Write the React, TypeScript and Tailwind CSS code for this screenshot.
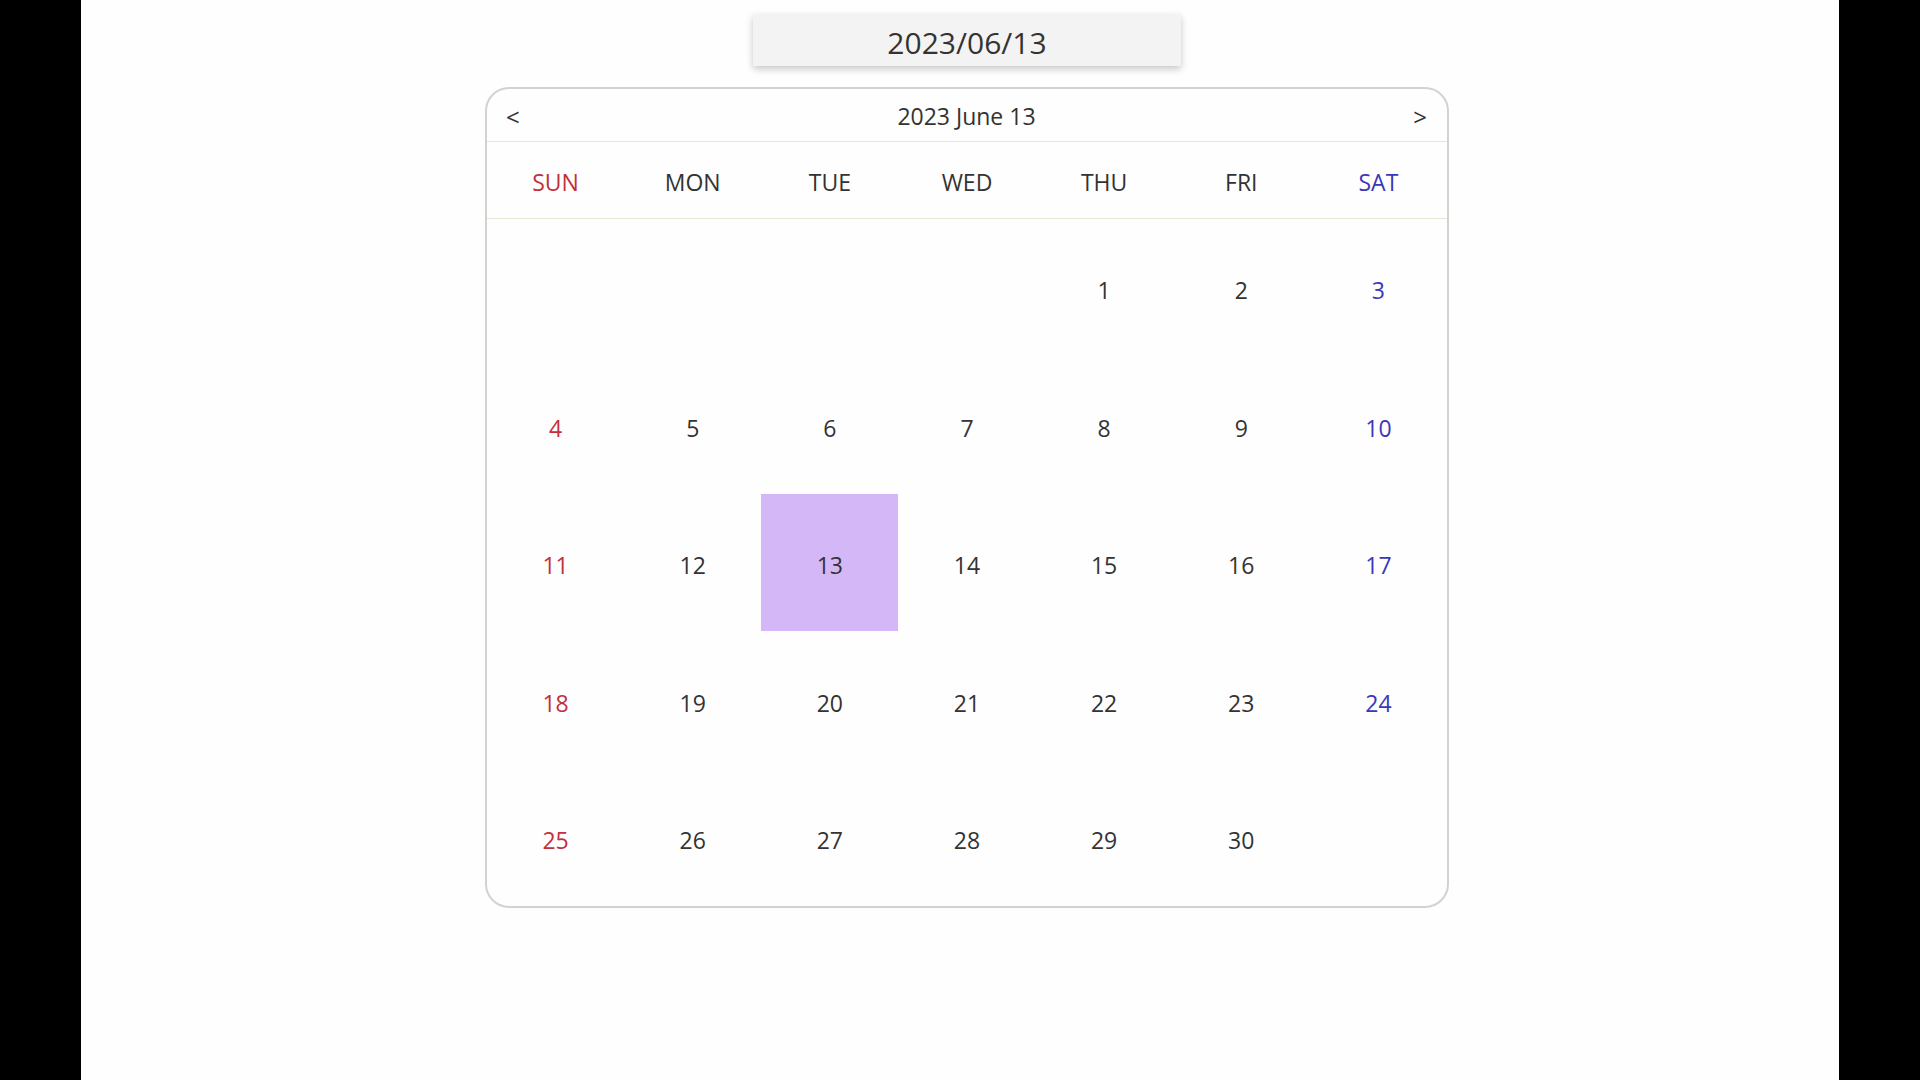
import { useState } from "react";

const WEEKDAYS = ["SUN", "MON", "TUE", "WED", "THU", "FRI", "SAT"];
const MONTHS = [
  "January",
  "February",
  "March",
  "April",
  "May",
  "June",
  "July",
  "August",
  "September",
  "October",
  "November",
  "December",
];

const pad = (n: number) => (n < 10 ? `0${n}` : `${n}`);

const dayColor = (idx: number) => {
  if (idx === 0) return "text-[#c3303c]";
  if (idx === 6) return "text-[#3a38b8]";
  return "text-[#333333]";
};

export default function App() {
  const [year, setYear] = useState(2023);
  const [month, setMonth] = useState(5);
  const [selected, setSelected] = useState(13);

  const firstDay = new Date(year, month, 1).getDay();
  const daysInMonth = new Date(year, month + 1, 0).getDate();

  // Blank cells before the 1st, then the days of the month
  const cells: (number | null)[] = [];
  for (let i = 0; i < firstDay; i++) cells.push(null);
  for (let d = 1; d <= daysInMonth; d++) cells.push(d);
  while (cells.length % 7 !== 0) cells.push(null);

  const moveMonth = (diff: number) => {
    let m = month + diff;
    let y = year;
    if (m < 0) {
      m = 11;
      y -= 1;
    } else if (m > 11) {
      m = 0;
      y += 1;
    }
    setMonth(m);
    setYear(y);
  };

  return (
    <div
      className="flex h-screen w-full overflow-hidden"
      style={{ fontFamily: '"Open Sans", "Noto Sans", sans-serif' }}
    >
      <div className="w-[81px] shrink-0 bg-black" />
      <main className="flex flex-1 flex-col items-center bg-[#fefefe] pl-[14px]">
        <button className="mt-[14px] flex h-[52px] w-[428px] items-center justify-center bg-[#f3f3f3] pt-[5px] text-[30px] text-[#333333] shadow-[0_3px_7px_rgba(0,0,0,0.22)]">
          {year}/{pad(month + 1)}/{pad(selected)}
        </button>

        <section className="mt-[21px] flex h-[821px] w-[964px] flex-col overflow-hidden rounded-[24px] border-2 border-[#d2d2d2]">
          {/* Month navigation */}
          <header className="flex h-[53px] items-center justify-between border-b border-[#e6e6d6] pl-[19px] pr-[20px] pt-[3px] text-[24px] text-[#333333]">
            <button onClick={() => moveMonth(-1)}>&lt;</button>
            <span className="text-[23px]">
              {year} {MONTHS[month]} {selected}
            </span>
            <button onClick={() => moveMonth(1)}>&gt;</button>
          </header>

          {/* Weekday labels */}
          <div className="grid h-[77px] grid-cols-7 items-center border-b border-[#e6e6d6] pt-[5px] text-[23px]">
            {WEEKDAYS.map((day, idx) => (
              <div key={day} className={`text-center ${dayColor(idx)}`}>
                {day}
              </div>
            ))}
          </div>

          {/* Days */}
          <div className="grid flex-1 grid-cols-7 grid-rows-5">
            {cells.map((d, i) => (
              <div
                key={i}
                onClick={() => d && setSelected(d)}
                className={`flex items-center justify-center pt-[6px] text-[23px] ${
                  d === selected ? "bg-[#d4b7f6]" : ""
                } ${d ? "cursor-pointer" : ""} ${
                  d === selected ? "text-[#333333]" : dayColor(i % 7)
                }`}
              >
                {d}
              </div>
            ))}
          </div>
        </section>
      </main>
      <div className="w-[81px] shrink-0 bg-black" />
    </div>
  );
}
